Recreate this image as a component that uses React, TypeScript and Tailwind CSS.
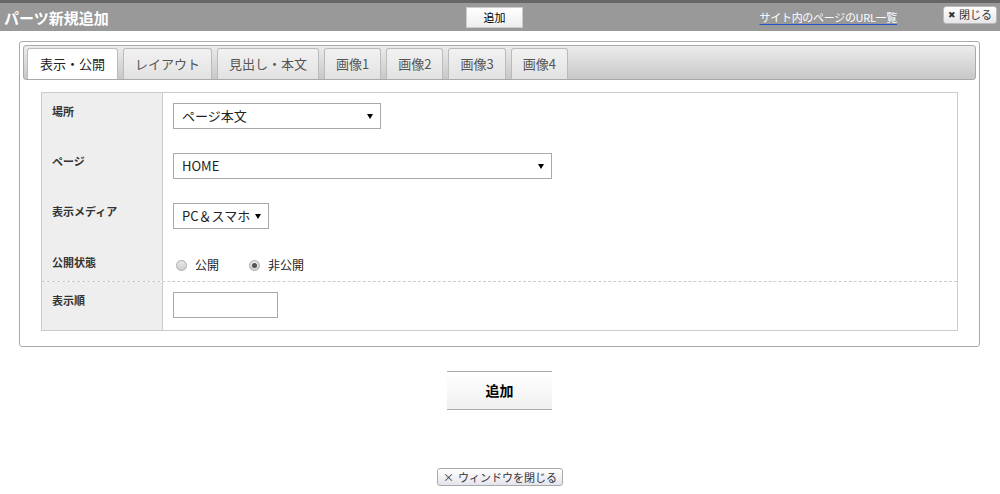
const font = { fontFamily: '"Noto Sans CJK JP", "Liberation Sans", sans-serif' };

const tabs = ['表示・公開', 'レイアウト', '見出し・本文', '画像1', '画像2', '画像3', '画像4'];

function FakeSelect({ value, width }: { value: string; width: string }) {
  return (
    <div className={`${width} h-[26px] border border-[#aaa] bg-white flex items-center justify-between pl-[8px] pr-[7px] text-[13px] text-[#222]`}>
      <span>{value}</span>
      <span className="w-0 h-0 border-l-[3px] border-r-[3px] border-t-[5px] border-l-transparent border-r-transparent border-t-black" />
    </div>
  );
}

function Radio({ label, checked }: { label: string; checked?: boolean }) {
  return (
    <label className="flex items-center gap-[8px] text-[12px] text-[#222]">
      <span className="w-[11px] h-[11px] rounded-full border border-[#aaa] bg-gradient-to-b from-[#e8e8e8] to-[#cfcfcf] flex items-center justify-center">
        {checked && <span className="w-[5px] h-[5px] rounded-full bg-[#555]" />}
      </span>
      {label}
    </label>
  );
}

function Row({ label, children, height, dashed }: { label: string; children: React.ReactNode; height: string; dashed?: boolean }) {
  return (
    <div className={`flex ${height} ${dashed ? 'border-t border-dashed border-[#ccc]' : ''}`}>
      <div className="w-[121px] shrink-0 bg-[#eee] border-r border-[#ccc] pl-[10px] pt-[10px] text-[11px] font-bold text-[#333]">
        {label}
      </div>
      <div className="flex-1 pl-[10px] pt-[10px]">{children}</div>
    </div>
  );
}

export default function App() {
  return (
    <div className="w-[1000px] h-[494px] bg-white overflow-hidden" style={font}>
      {/* Header */}
      <div className="border-t-[3px] border-[#666] bg-[#999] h-[31px] grid grid-cols-[1fr_auto_1fr] items-center">
        <h1 className="pl-[4px] text-[15px] font-bold text-white leading-none">パーツ新規追加</h1>
        <button className="w-[57px] h-[21px] bg-gradient-to-b from-white to-[#eee] border border-[#ccc] text-[11px] text-black mr-[11px]">
          追加
        </button>
        <div className="flex items-center justify-end pr-[3px] gap-[46px]">
          <a className="text-[11px] tracking-[-0.3px] text-white underline decoration-[#2255cc] underline-offset-2">サイト内のページのURL一覧</a>
          <button className="w-[54px] h-[18px] rounded-[3px] bg-gradient-to-b from-white to-[#e6e6ea] border border-[#bbb] text-[11px] text-[#333] flex items-center justify-center gap-[3px] mb-[5px]">
            <span className="text-[9px]">✖</span>閉じる
          </button>
        </div>
      </div>

      {/* Panel */}
      <div className="mt-[10px] ml-[19px] mr-[20px] border border-[#aaa] rounded-[3px] p-[3px] pb-[15px]">
        <div className="h-[35px] border border-[#aaa] rounded-[3px] bg-gradient-to-b from-[#ececec] to-[#c8c8c8] flex items-end gap-[5px] pl-[3px]">
          {tabs.map((t, i) => (
            <div
              key={t}
              className={`h-[31px] flex items-center text-[13px] rounded-t-[3px] border border-b-0 border-[#bbb] ${
                i === 0 ? 'bg-white text-[#222] px-[12px]' : 'bg-gradient-to-b from-[#f2f2f2] to-[#e2e2e2] text-[#555] px-[11px]'
              }`}
            >
              {t}
            </div>
          ))}
        </div>

        <div className="mt-[12px] mx-[18px] border border-[#ccc]">
          <Row label="場所" height="h-[50px]">
            <FakeSelect value="ページ本文" width="w-[208px]" />
          </Row>
          <Row label="ページ" height="h-[50px]">
            <FakeSelect value="HOME" width="w-[379px]" />
          </Row>
          <Row label="表示メディア" height="h-[51px]">
            <FakeSelect value="PC＆スマホ" width="w-[96px]" />
          </Row>
          <Row label="公開状態" height="h-[37px]">
            <div className="flex items-center gap-[30px] pl-[3px] pt-[2px]">
              <Radio label="公開" />
              <Radio label="非公開" checked />
            </div>
          </Row>
          <Row label="表示順" height="h-[49px]" dashed>
            <div className="w-[105px] h-[26px] border border-[#aaa] bg-white" />
          </Row>
        </div>
      </div>

      {/* Submit */}
      <div className="flex justify-center mt-[24px] pr-[1px]">
        <button className="w-[105px] h-[39px] border-y border-[#aaa] bg-gradient-to-b from-white to-[#f0f0f0] text-[14px] font-bold text-black">
          追加
        </button>
      </div>

      <div className="flex justify-center mt-[58px]">
        <button className="w-[126px] h-[18px] rounded-[3px] border border-[#aaa] bg-gradient-to-b from-white to-[#e4e4ec] text-[11px] text-[#333] flex items-center justify-center gap-[4px]">
          <span>×</span>ウィンドウを閉じる
        </button>
      </div>
    </div>
  );
}
